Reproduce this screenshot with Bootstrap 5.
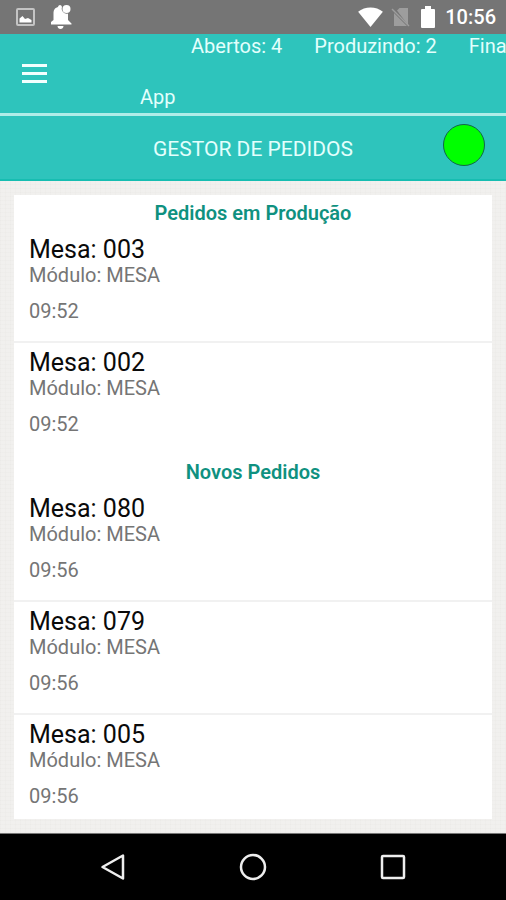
<!DOCTYPE html>
<html lang="pt-BR">
<head>
<meta charset="utf-8">
<meta name="viewport" content="width=device-width, initial-scale=1">
<title>Gestor de Pedidos</title>
<link href="https://cdn.jsdelivr.net/npm/bootstrap@5.3.0/dist/css/bootstrap.min.css" rel="stylesheet">
<style>
  body { font-family: Roboto, "Noto Sans", sans-serif; font-size: 20px; line-height: 24px; color: #0a0a0a; background: #f1f0ee; }
  .status-bar { height: 34px; padding: 0 10px 0 16px; background: #757575; color: #fff; font-weight: 500; }
  .teal { background: #2ec4bc; color: #e3fffc; }
  .top-bar { min-height: 79px; }
  .menu-btn { padding: 29px 20px 28px; line-height: 0; color: #fff; background: none; border: 0; }
  .counters { gap: 32px; padding-left: 122px; }
  .app-link { color: inherit; margin: 27px 0 4px 71px; }
  .title-bar { border-top: 3px solid #b0ede8; border-bottom: 2px solid #17bdb1; padding: 0 21px 0 63px; min-height: 68px; }
  .title-bar h1 { font-size: 21px; line-height: 26px; margin: 3px 0 0; }
  .online-dot { width: 42px; height: 42px; margin-bottom: 6px; background: #00ff00; border: 1px solid #12664a; }
  .canvas-area {
    padding: 14px;
    background-color: #f1f0ee;
    background-image:
      repeating-linear-gradient(0deg, rgba(120,110,90,.02) 0 1px, transparent 1px 4px),
      repeating-linear-gradient(90deg, rgba(120,110,90,.02) 0 1px, transparent 1px 5px);
  }
  .section-title { font-size: 20px; line-height: 24px; font-weight: 600; color: #0f9180; margin: 0; padding: 6px 0; }
  .order { padding: 4px 15px 20px; }
  .order + .order { border-top: 2px solid #f1f1f1; padding-top: 5px; }
  .order h3 { font-size: 25px; line-height: 30px; font-weight: 400; margin: 0; }
  .order p, .order time { font-size: 20px; line-height: 20px; color: #757575; margin: 0; }
  .order time { margin-top: 16px; }
  .order-last { padding-bottom: 13px; }
  .nav-keys { height: 67px; background: #000; border-top: 1px solid #777; padding: 0 43px; }
  .nav-keys button { background: none; border: 0; line-height: 0; }
</style>
<script src="https://cdn.jsdelivr.net/npm/bootstrap@5.3.0/dist/js/bootstrap.bundle.min.js"></script>
</head>
<body class="min-vh-100 d-flex flex-column">
  <div class="status-bar d-flex align-items-center">
    <svg width="19" height="18" viewBox="0 0 19 18" aria-hidden="true"><rect x="1" y="1" width="17" height="16" rx="1" fill="none" stroke="#c4c4c4" stroke-width="2"/><path d="M3.500 14.500v-4l3-2.500 2.500 3 3-1 3.500 2v2.500z" fill="#fff"/></svg>
    <svg class="ms-3 me-auto" width="22" height="26" viewBox="2 0 22 26" aria-hidden="true"><path d="M9 3C9.500 .3 12.500 .3 13 3a5 5 0 0 0 6 6.500V16l3.500 3.500v1H0v-1L4.500 16v-6c0-4 1-6 4.500-7zM8.500 22h6c0 4-6 4-6 0z" fill="#fff"/><circle cx="17.500" cy="5" r="4" fill="#fff"/></svg>
    <div class="d-flex align-items-center">
      <svg width="25" height="20" viewBox="0 0 26 21" aria-hidden="true"><path d="M0 5C7-1 19-1 26 5L13 21z" fill="#fff"/></svg>
      <svg class="ms-2" width="20" height="21" viewBox="0 0 20 21" aria-hidden="true"><path d="M8.500 1H17v17L6 3.500zM3 6l13 13H3z" fill="#9d9d9d"/><path d="M1 2l17 17" stroke="#9d9d9d" stroke-width="1.500"/></svg>
      <svg class="ms-2 me-2" width="18" height="22" viewBox="0 0 16 22" aria-hidden="true"><path d="M5 0h6v3h3q1 0 1 1v17q0 1-1 1H2q-1 0-1-1V4q0-1 1-1h3z" fill="#fff"/></svg>
      <span>10:56</span>
    </div>
  </div>

  <header class="teal">
    <div class="top-bar d-flex align-items-start">
      <button type="button" class="menu-btn" aria-label="Menu">
        <svg width="29" height="20" viewBox="0 0 29 20" aria-hidden="true"><path d="M2 2.500h25M2 10.500h25M2 18.500h25" stroke="#f2fffe" stroke-width="3"/></svg>
      </button>
      <div class="flex-grow-1 overflow-hidden">
        <div class="counters d-flex text-nowrap">
          <span>Abertos: 4</span><span>Produzindo: 2</span><span>Fina</span>
        </div>
        <a href="#" class="app-link d-inline-block text-decoration-none">App</a>
      </div>
    </div>
    <div class="title-bar d-flex align-items-center">
      <h1 class="flex-grow-1 text-center fw-normal">GESTOR DE PEDIDOS</h1>
      <span class="online-dot rounded-circle" role="img" aria-label="Online"></span>
    </div>
  </header>

  <main class="canvas-area flex-grow-1">
    <div class="bg-white">
      <h2 class="section-title text-center">Pedidos em Produção</h2>
      <article class="order"><h3>Mesa: 003</h3><p>Módulo: MESA</p><time class="d-block">09:52</time></article>
      <article class="order"><h3>Mesa: 002</h3><p>Módulo: MESA</p><time class="d-block">09:52</time></article>
      <h2 class="section-title text-center">Novos Pedidos</h2>
      <article class="order"><h3>Mesa: 080</h3><p>Módulo: MESA</p><time class="d-block">09:56</time></article>
      <article class="order"><h3>Mesa: 079</h3><p>Módulo: MESA</p><time class="d-block">09:56</time></article>
      <article class="order order-last"><h3>Mesa: 005</h3><p>Módulo: MESA</p><time class="d-block">09:56</time></article>
    </div>
  </main>

  <nav class="nav-keys d-flex align-items-center" aria-label="Sistema">
    <button type="button" class="flex-fill" aria-label="Voltar"><svg width="28" height="28" viewBox="0 0 28 28"><path d="M24 2.500v23L3.500 14z" fill="none" stroke="#eee" stroke-width="2.500" stroke-linejoin="round"/></svg></button>
    <button type="button" class="flex-fill" aria-label="Início"><svg width="28" height="28" viewBox="0 0 28 28"><circle cx="14" cy="14" r="12" fill="none" stroke="#eee" stroke-width="2.500"/></svg></button>
    <button type="button" class="flex-fill" aria-label="Recentes"><svg width="28" height="28" viewBox="0 0 28 28"><rect x="3" y="3" width="22" height="22" rx="1" fill="none" stroke="#eee" stroke-width="2.500"/></svg></button>
  </nav>
</body>
</html>
